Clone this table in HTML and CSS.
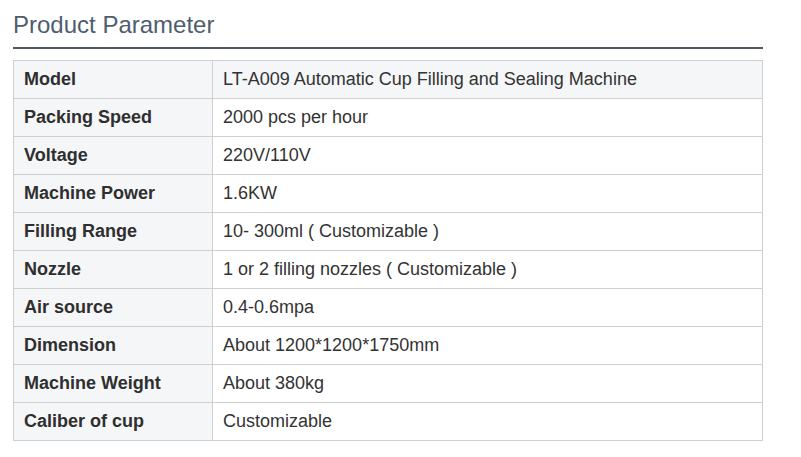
FILE: index.html
```html
<!DOCTYPE html>
<html>
<head>
<meta charset="utf-8">
<link rel="stylesheet" href="styles.css">
</head>
<body>
<div class="wrap">
  <h2 class="title">Product Parameter</h2>
  <table class="params">
    <tr class="head"><th>Model</th><td>LT-A009 Automatic Cup Filling and Sealing Machine</td></tr>
    <tr><th>Packing Speed</th><td>2000 pcs per hour</td></tr>
    <tr><th>Voltage</th><td>220V/110V</td></tr>
    <tr><th>Machine Power</th><td>1.6KW</td></tr>
    <tr><th>Filling Range</th><td>10- 300ml ( Customizable )</td></tr>
    <tr><th>Nozzle</th><td>1 or 2 filling nozzles ( Customizable )</td></tr>
    <tr><th>Air source</th><td>0.4-0.6mpa</td></tr>
    <tr><th>Dimension</th><td>About 1200*1200*1750mm</td></tr>
    <tr><th>Machine Weight</th><td>About 380kg</td></tr>
    <tr><th>Caliber of cup</th><td>Customizable</td></tr>
  </table>
</div>
</body>
</html>
```
FILE: styles.css
```css
html, body { margin: 0; padding: 0; background: #fff; }
.wrap { width: 750px; margin-left: 13px; font-family: "Liberation Sans", Arial, sans-serif; }
.title {
  margin: 0;
  padding-top: 11px;
  height: 36px;
  font-size: 24px;
  font-weight: normal;
  line-height: 28px;
  color: #4f5d6d;
  border-bottom: 2px solid #4f5763;
}
.params {
  margin-top: 11px;
  width: 750px;
  border-collapse: collapse;
  font-size: 18px;
  color: #333;
}
.params th, .params td {
  border: 1px solid #cfcfcf;
  height: 38px;
  padding: 0 10px;
  text-align: left;
  vertical-align: middle;
  box-sizing: border-box;
}
.params th { width: 199px; background: #f5f6f8; font-weight: bold; color: #2f2f2f; }
.params td { background: #fff; }
.params .head td { background: #f5f6f8; }
```
